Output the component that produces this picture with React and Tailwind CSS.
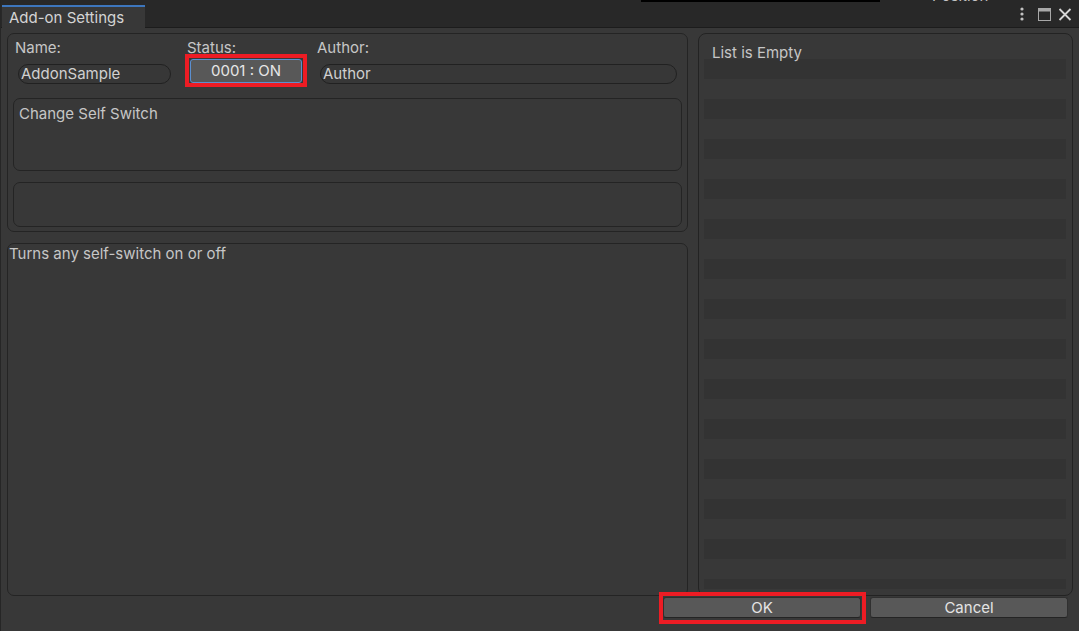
import React from 'react';

// Unity-style "Add-on Settings" editor window
const STRIPES = Array.from({ length: 27 }, (_, i) => i);

function TitleIcons() {
  return (
    <div className="ml-auto flex items-center h-full pr-[7px] pb-[1px]">
      <svg width="4" height="14" viewBox="0 0 4 14" className="mr-[14px]">
        <circle cx="2" cy="2" r="1.6" fill="#c2c2c2" />
        <circle cx="2" cy="7" r="1.6" fill="#c2c2c2" />
        <circle cx="2" cy="12" r="1.6" fill="#c2c2c2" />
      </svg>
      <svg width="13" height="13" viewBox="0 0 13 13" className="mr-[7px]">
        <rect x="0.5" y="0.5" width="12" height="12" fill="none" stroke="#a8a8a8" strokeWidth="1" />
        <rect x="0.5" y="0.5" width="12" height="3" fill="#a8a8a8" />
      </svg>
      <svg width="14" height="13" viewBox="0 0 14 13">
        <path d="M1.5 1 L12.5 12 M12.5 1 L1.5 12" stroke="#d6d6d6" strokeWidth="1.8" />
      </svg>
    </div>
  );
}

function Field({ children, width }) {
  return (
    <div
      className="ml-[3px] h-[20px] rounded-full border border-[#212121] bg-[#373737] pl-[2px] leading-[18px] text-[#d0d0d0]"
      style={{ width }}
    >
      {children}
    </div>
  );
}

function Button({ children, highlight }) {
  return (
    <button className="relative w-[198px] h-[21px] rounded-[3px] bg-[#585858] border border-[#303030] border-b-[#242424] text-[#e4e4e4] leading-[19px] text-center">
      {children}
      {highlight && (
        <span className="absolute -left-[5px] -right-[6px] -top-[6px] -bottom-[7px] border-4 border-[#ed1c24] pointer-events-none" />
      )}
    </button>
  );
}

export default function App() {
  return (
    <div className="w-[1079px] h-[631px] bg-[#383838] flex flex-col overflow-hidden text-[15px] text-[#c6c6c6] border-l border-[#262626] font-['Inter','Liberation_Sans',sans-serif]">
      {/* 타이틀 바 */}
      <div className="h-[28px] bg-[#282828] flex flex-col shrink-0">
        <div className="h-[2px] flex overflow-hidden">
          <div className="w-[640px] shrink-0" />
          <div className="w-[239px] h-[2px] bg-black shrink-0" />
          <div className="w-[52px] shrink-0" />
          <span className="leading-[17px] -mt-[13px] text-[#c4c4c4]">Position</span>
        </div>
        <div className="flex-1 flex items-end border-b border-[#1c1c1c]">
          <div className="ml-[1px] w-[143px] h-[23px] -mb-px bg-[#383838] border-t-2 border-[#3d76bd] flex items-center pl-[7px] text-[#d4d4d4] leading-[17px]">
            Add-on Settings
          </div>
          <TitleIcons />
        </div>
      </div>

      {/* 본문 */}
      <div className="flex gap-[10px] pl-[6px] pt-[5px] h-[568px] shrink-0">
        <div className="w-[681px] flex flex-col">
          <div className="border border-[#242424] rounded-[7px] pt-[5px] pb-[4px]">
            <div className="flex pl-[7px]">
              <div className="w-[172px]">
                <div className="leading-[17px]">Name:</div>
                <div className="mt-[8px]">
                  <Field width={153}>AddonSample</Field>
                </div>
              </div>
              <div className="w-[130px]">
                <div className="leading-[17px]">Status:</div>
                <div className="relative mt-[3px] ml-[3px] w-[112px] h-[24px] rounded-[3px] bg-[#585858] border border-[#5b8fcf] text-center leading-[22px] text-[#e6e6e6]">
                  0001 : ON
                  <span className="absolute -left-[6px] -right-[6px] -top-[6px] -bottom-[5px] border-4 border-[#ed1c24] pointer-events-none" />
                </div>
              </div>
              <div className="flex-1">
                <div className="leading-[17px]">Author:</div>
                <div className="mt-[8px]">
                  <Field width={357}>Author</Field>
                </div>
              </div>
            </div>
            <div className="mt-[14px] ml-[5px] mr-[5px] h-[73px] border border-[#242424] rounded-[7px] pl-[5px] pt-[6px] leading-[17px]">
              Change Self Switch
            </div>
            <div className="mt-[11px] ml-[5px] mr-[5px] h-[45px] border border-[#242424] rounded-[7px]" />
          </div>
          <div className="mt-[11px] flex-1 border border-[#242424] rounded-[7px] pl-px pt-px leading-[17px]">
            Turns any self-switch on or off
          </div>
        </div>

        <div className="w-[375px] border border-[#232323] rounded-[8px] flex flex-col">
          <div className="relative z-10 h-[25px] pt-[10px] pl-[13px] leading-[17px] shrink-0">List is Empty</div>
          <div className="ml-[5px] mr-[6px] h-[530px] overflow-hidden">
            {STRIPES.map((i) => (
              <div key={i} className={i % 2 === 0 ? 'h-[20px] bg-[#333333]' : 'h-[20px]'} />
            ))}
          </div>
        </div>
      </div>

      {/* 버튼 */}
      <div className="flex justify-end gap-[9px] pr-[11px] mt-[1px]">
        <Button highlight>OK</Button>
        <Button>Cancel</Button>
      </div>
    </div>
  );
}
